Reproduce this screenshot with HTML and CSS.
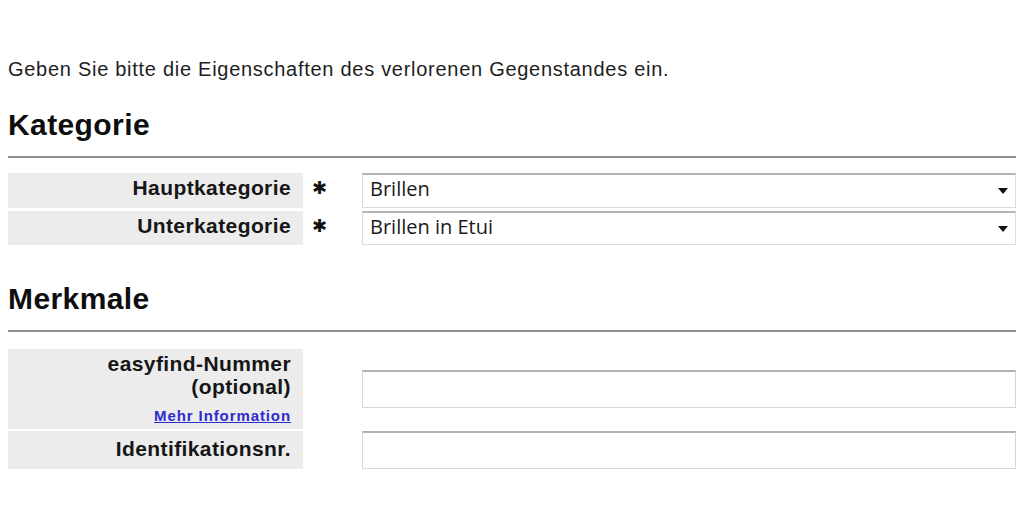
FILE: index.html
```html
<!DOCTYPE html>
<html lang="de">
<head>
<meta charset="utf-8">
<title>Verlorener Gegenstand</title>
<link rel="stylesheet" href="styles.css">
</head>
<body>
<div class="page">
  <p class="intro">Geben Sie bitte die Eigenschaften des verlorenen Gegenstandes ein.</p>

  <h2 class="section">Kategorie</h2>
  <div class="form form-cat">
    <div class="label">Hauptkategorie</div>
    <div class="req">✱</div>
    <div class="field"><div class="select-wrap"><select class="select"><option>Brillen</option></select></div></div>

    <div class="label">Unterkategorie</div>
    <div class="req">✱</div>
    <div class="field"><div class="select-wrap"><select class="select"><option>Brillen in Etui</option></select></div></div>
  </div>

  <h2 class="section section-2">Merkmale</h2>
  <div class="form form-feat">
    <div class="label">
      <div>easyfind-Nummer</div>
      <div>(optional)</div>
      <a class="more" href="#">Mehr Information</a>
    </div>
    <div class="req"></div>
    <div class="field field-mid"><input class="text" type="text"></div>

    <div class="label label-mid">Identifikationsnr.</div>
    <div class="req"></div>
    <div class="field field-mid"><input class="text" type="text"></div>
  </div>
</div>
</body>
</html>
```

FILE: styles.css
```css
html, body {
  margin: 0;
  padding: 0;
  background: #ffffff;
}

.page {
  padding: 57px 8px 0 8px;
  font-family: "Liberation Sans", Arial, sans-serif;
  color: #1c1c1c;
}

.intro {
  margin: 0;
  font-size: 20px;
  line-height: 24px;
  letter-spacing: 0.72px;
  color: #1e1e1e;
}

.section {
  margin: 26px 0 0 0;
  font-size: 30px;
  line-height: 36px;
  font-weight: bold;
  letter-spacing: 0.4px;
  color: #0e0e0e;
  padding-bottom: 13px;
  border-bottom: 2px solid #8e8e8e;
}

.section-2 {
  margin-top: 36px;
}

.form {
  display: grid;
  grid-template-columns: 295px 59px 1fr;
  row-gap: 3px;
  margin-top: 15px;
}

.form-cat {
  grid-template-rows: 35px 34px;
}

.form-feat {
  margin-top: 17px;
  grid-template-rows: 80px 38px;
  row-gap: 2px;
}

.label {
  background: #ececec;
  text-align: right;
  padding: 3px 12px 0 0;
  font-size: 21px;
  line-height: 23px;
  font-weight: bold;
  letter-spacing: 0.4px;
  color: #161616;
}

.label-mid {
  padding-top: 6px;
}

.more {
  display: block;
  margin-top: 8px;
  font-size: 15px;
  line-height: 20px;
  letter-spacing: 0.9px;
  color: #2b2bd0;
  text-decoration: underline;
}

.req {
  padding: 3px 0 0 9px;
  font-family: "DejaVu Sans", sans-serif;
  font-size: 18px;
  line-height: 24px;
  color: #111;
}

.field {
  display: flex;
}

.field-mid {
  align-items: center;
}

.select-wrap {
  position: relative;
  flex: 1;
  display: flex;
}

.select-wrap::after {
  content: "";
  position: absolute;
  right: 8px;
  top: 15px;
  border-left: 5px solid transparent;
  border-right: 5px solid transparent;
  border-top: 6px solid #111;
  pointer-events: none;
}

.select {
  -webkit-appearance: none;
  appearance: none;
  flex: 1;
  margin: 0;
  height: 100%;
  box-sizing: border-box;
  border: 1px solid #dcdcdc;
  border-top: 2px solid #b4b4b4;
  border-radius: 0;
  background: #fff;
  padding: 0 30px 5px 7px;
  font-family: "Open Sans", "Noto Sans", sans-serif;
  font-size: 20px;
  color: #1a1a1a;
}

.text {
  flex: 1;
  margin: 0;
  height: 38px;
  box-sizing: border-box;
  border: 1px solid #d8d8d8;
  border-top: 2px solid #b2b2b2;
  border-radius: 0;
  background: #fff;
  padding: 0 6px;
  font-family: "Open Sans", sans-serif;
  font-size: 18px;
}
```
